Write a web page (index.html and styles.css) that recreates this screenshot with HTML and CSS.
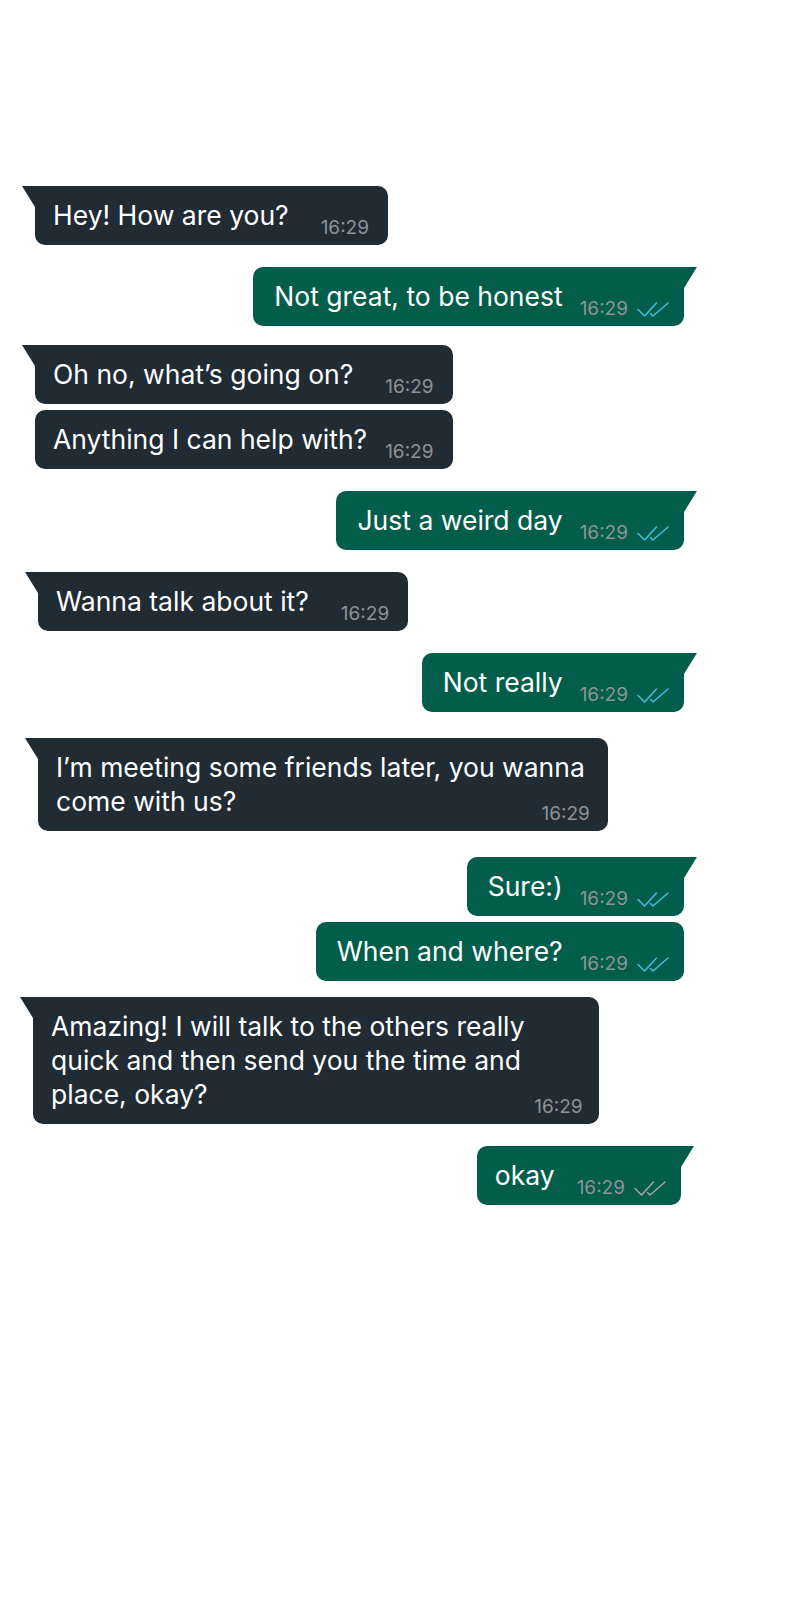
FILE: index.html
```html
<!DOCTYPE html>
<html lang="en">
<head>
<meta charset="utf-8">
<title>Chat</title>
<link rel="stylesheet" href="styles.css">
</head>
<body>
<svg width="0" height="0" class="defs" aria-hidden="true">
  <symbol id="checks" viewBox="0 0 32 15">
    <path d="M1 7.5 L7.5 14 L19.5 1" fill="none" stroke="currentColor" stroke-width="1.6" stroke-linecap="round" stroke-linejoin="round"/>
    <path d="M13.5 11.5 L16 14 L31 1" fill="none" stroke="currentColor" stroke-width="1.6" stroke-linecap="round" stroke-linejoin="round"/>
  </symbol>
</svg>
<main class="chat">
  <div class="row in">
    <div class="bubble tail"><span class="text">Hey! How are you?</span><span class="meta"><span class="time">16:29</span></span></div>
  </div>
  <div class="row out">
    <div class="bubble tail"><span class="text">Not great, to be honest</span><span class="meta"><span class="time">16:29</span><svg class="check read"><use href="#checks"/></svg></span></div>
  </div>
  <div class="row in gap-md">
    <div class="group">
      <div class="bubble tail"><span class="text">Oh no, what’s going on?</span><span class="meta"><span class="time">16:29</span></span></div>
      <div class="bubble"><span class="text">Anything I can help with?</span><span class="meta tight"><span class="time">16:29</span></span></div>
    </div>
  </div>
  <div class="row out">
    <div class="bubble tail"><span class="text">Just a weird day</span><span class="meta"><span class="time">16:29</span><svg class="check read"><use href="#checks"/></svg></span></div>
  </div>
  <div class="row in shift">
    <div class="bubble tail"><span class="text">Wanna talk about it?</span><span class="meta"><span class="time">16:29</span></span></div>
  </div>
  <div class="row out">
    <div class="bubble tail"><span class="text">Not really</span><span class="meta"><span class="time">16:29</span><svg class="check read"><use href="#checks"/></svg></span></div>
  </div>
  <div class="row in shift gap-lg">
    <div class="bubble tail multi"><span class="text">I’m meeting some friends later, you wanna<br>come with us?</span><span class="meta"><span class="time">16:29</span></span></div>
  </div>
  <div class="row out gap-lg">
    <div class="group">
      <div class="bubble tail"><span class="text">Sure:)</span><span class="meta"><span class="time">16:29</span><svg class="check read"><use href="#checks"/></svg></span></div>
      <div class="bubble"><span class="text">When and where?</span><span class="meta"><span class="time">16:29</span><svg class="check read"><use href="#checks"/></svg></span></div>
    </div>
  </div>
  <div class="row in unshift gap-sm">
    <div class="bubble tail multi wide"><span class="text">Amazing! I will talk to the others really<br>quick and then send you the time and<br>place, okay?</span><span class="meta"><span class="time">16:29</span></span></div>
  </div>
  <div class="row out nudge">
    <div class="bubble tail snug"><span class="text">okay</span><span class="meta loose"><span class="time">16:29</span><svg class="check sent"><use href="#checks"/></svg></span></div>
  </div>
</main>
</body>
</html>
```

FILE: styles.css
```css
html, body {
  margin: 0;
  background: #ffffff;
}

body {
  min-height: 1600px;
  font-family: Inter, "Noto Sans", "Liberation Sans", sans-serif;
}

.defs {
  position: absolute;
  width: 0;
  height: 0;
}

.chat {
  width: 649px;
  margin-left: 35px;
  padding-top: 186px;
  display: flex;
  flex-direction: column;
}

.row {
  display: flex;
  margin-top: 22px;
}

.row:first-child {
  margin-top: 0;
}

.row.out {
  justify-content: flex-end;
}

.row.gap-lg {
  margin-top: 26px;
}

.row.gap-md {
  margin-top: 19px;
}

.row.gap-sm {
  margin-top: 16px;
}

.row.shift {
  padding-left: 3px;
}

.row.unshift {
  margin-left: -2px;
}

.row.nudge {
  padding-right: 3px;
}

.group {
  display: flex;
  flex-direction: column;
  gap: 6px;
}

.row.out .group {
  align-items: flex-end;
}

.bubble {
  position: relative;
  display: flex;
  align-items: flex-end;
  padding: 12px 19px 13px 18px;
  border-radius: 10px;
  color: #ffffff;
}

.row.in .bubble {
  background: #202b33;
}

.row.out .bubble {
  background: #025d4b;
  padding-left: 21px;
  padding-right: 15px;
}

.row.out .bubble.snug {
  padding-left: 18px;
}

.text {
  font-size: 26.5px;
  line-height: 34px;
}

.meta {
  display: flex;
  align-items: center;
  gap: 9px;
  margin-left: 32px;
  margin-bottom: -7px;
  font-size: 19px;
  line-height: 22px;
  color: #8d9396;
}

.meta.tight {
  margin-left: 18px;
}

.row.out .meta {
  margin-left: 17px;
}

.row.out .meta.loose {
  margin-left: 22px;
}

.check {
  width: 32px;
  height: 15px;
  margin-top: 1px;
}

.check.read {
  color: #47b9dc;
}

.check.sent {
  color: #9ea7a6;
}

.bubble.multi {
  flex-direction: column;
  align-items: stretch;
  padding-right: 23px;
}

.bubble.multi .meta {
  align-self: flex-end;
  margin-left: 0;
  margin-top: -15px;
  margin-right: -5px;
}

.bubble.multi.wide {
  padding-right: 74px;
}

.bubble.multi.wide .meta {
  margin-right: -58px;
}

.row.in .bubble.tail {
  border-top-left-radius: 0;
}

.row.out .bubble.tail {
  border-top-right-radius: 0;
}

.bubble.tail::before {
  content: "";
  position: absolute;
  top: 0;
  width: 13px;
  height: 21px;
  background: inherit;
}

.row.in .bubble.tail::before {
  left: -13px;
  clip-path: polygon(0 0, 100% 0, 100% 100%);
}

.row.out .bubble.tail::before {
  right: -13px;
  clip-path: polygon(0 0, 100% 0, 0 100%);
}
```
